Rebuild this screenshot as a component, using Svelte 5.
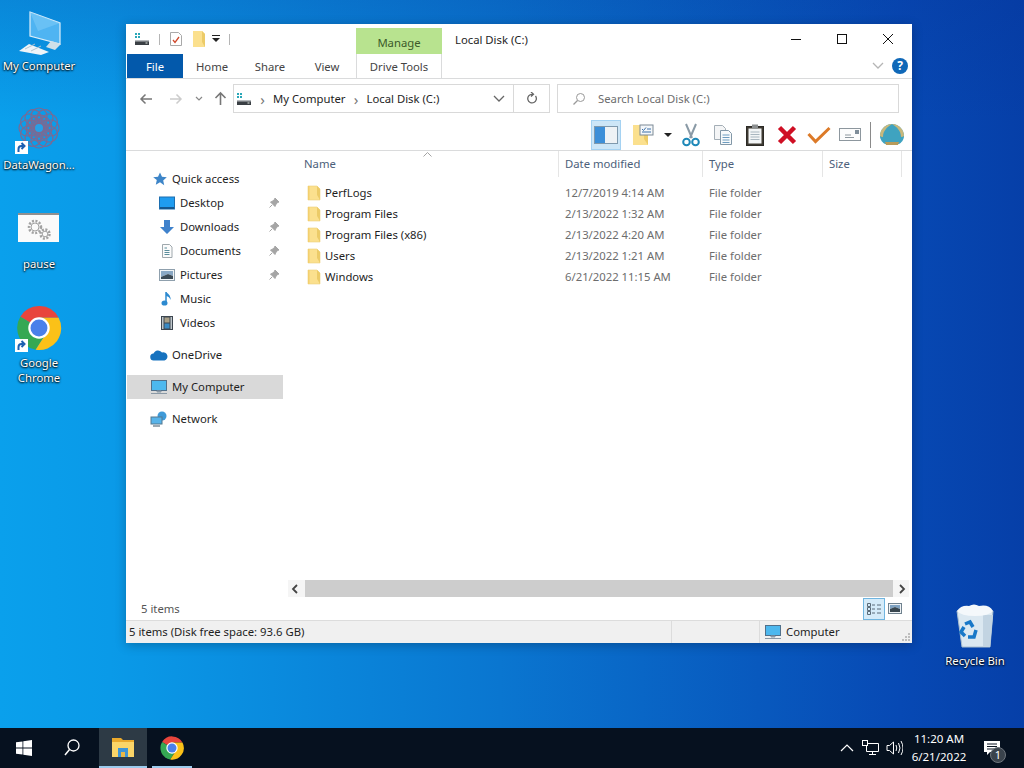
<script lang="ts">
  const files = [
    { name: 'PerfLogs', date: '12/7/2019 4:14 AM' },
    { name: 'Program Files', date: '2/13/2022 1:32 AM' },
    { name: 'Program Files (x86)', date: '2/13/2022 4:20 AM' },
    { name: 'Users', date: '2/13/2022 1:21 AM' },
    { name: 'Windows', date: '6/21/2022 11:15 AM' }
  ];
  const petals = Array.from({ length: 12 }, (_, i) => i * 30);
</script>

{#snippet shortcut()}
  <rect x="0" y="34" width="13" height="13" fill="#fff" />
  <path d="M3.500 45v-3q0-3 3-3h1.500M6.500 36l3 3-3 3" fill="none" stroke="#1c5fb0" stroke-width="2" />
{/snippet}

{#snippet chromeLogo()}
  <path d="M24 24 7.500 14A19.500 19.500 0 0 1 41.400 15H24z" fill="#e8453c" />
  <path d="M24 24 7.500 14A19.500 19.500 0 0 0 21 43.300l7-11z" fill="#35a853" />
  <path d="M24 15h17.400A19.500 19.500 0 0 1 21 43.300l9-14z" fill="#fbc118" />
  <circle cx="24" cy="24" r="9.500" fill="#fff" />
  <circle cx="24" cy="24" r="7.500" fill="#4a80ea" />
{/snippet}

{#snippet drive()}
  <svg width="16" height="16" viewBox="0 0 16 16">
    <path d="M1 2h2v2H1zM4 2h2v2H4zM1 5h2v2H1zM4 5h2v2H4z" fill="#2aa7b8" />
    <rect x="1" y="9" width="14" height="5" fill="#3a3f44" />
    <rect x="1" y="9" width="14" height="1.500" fill="#b6babd" />
    <rect x="11.500" y="11.500" width="2" height="1" fill="#e8f0e8" />
  </svg>
{/snippet}

{#snippet monitor()}
  <svg width="18" height="16" viewBox="0 0 18 16">
    <rect x="1.500" y="1.500" width="15" height="10" fill="#4db8ee" stroke="#51708a" />
    <path d="M7 12h4v1H7zM1 14.500h16" stroke="#8a99a6" fill="#8a99a6" />
  </svg>
{/snippet}

{#snippet folder()}
  <svg class="folder" width="14" height="16" viewBox="0 0 14 16">
    <path d="M1 1h9l3 3v11H1z" fill="#fbe08e" stroke="#ecd27e" stroke-width=".6" />
    <path d="M10 1v9l3 5V4z" fill="#eccb68" />
    <path d="M1 1h1.500v14H1z" fill="#f3cf6e" />
  </svg>
{/snippet}

{#snippet pin()}
  <svg class="pin" width="12" height="12" viewBox="0 0 12 12">
    <path d="M7 1l4 4-1.500.5L7.500 8 7 9.500 2.500 5 4 4.500 6.500 2.500zM4 8l-2.500 2.500" fill="#a5a5a5" stroke="#a5a5a5" />
  </svg>
{/snippet}

<div class="desktop">
  <div class="icon-col">
    <div class="cell">
      <svg width="48" height="48" viewBox="0 0 48 48">
        <path d="M15 4l30 11v21l-30-8z" fill="#4fb4f2" stroke="#dceefa" stroke-width="1.200" />
        <path d="M15 4l30 11-22 8z" fill="#7cc9f6" opacity=".6" />
        <path d="M36 33l10 3-6 6-9-3z" fill="#cfdfe8" />
        <path d="M4 43l10-7 20 8-8 3z" fill="#eef4f8" />
        <path d="M10 41l10-5M16 43l10-5" stroke="#b3c4d0" />
      </svg>
      <span>My Computer</span>
    </div>
    <div class="cell">
      <svg width="48" height="48" viewBox="0 0 48 48">
        <g fill="none" stroke="#a05a78" stroke-width="1.200" opacity=".75">
          {#each petals as a}
            <circle cx="24" cy="9" r="8" transform="rotate({a} 24 21)" />
            <circle cx="24" cy="14" r="6" transform="rotate({a + 15} 24 21)" />
          {/each}
        </g>
        <circle cx="24" cy="21" r="4" fill="#28a0e6" />
        {@render shortcut()}
      </svg>
      <span>DataWagon...</span>
    </div>
    <div class="cell">
      <svg width="48" height="48" viewBox="0 0 48 48">
        <rect x="3" y="7" width="41" height="29" fill="#fafafa" />
        <rect x="3" y="7" width="41" height="2" fill="#8f8f8f" />
        <g fill="none" stroke="#a2a2a2">
          <circle cx="20" cy="21" r="6" stroke-width="2.500" stroke-dasharray="2 1.500" />
          <circle cx="20" cy="21" r="4" />
          <circle cx="30" cy="28" r="4.500" stroke-width="2.500" stroke-dasharray="2 1.500" />
          <circle cx="30" cy="28" r="2.800" />
        </g>
      </svg>
      <span>pause</span>
    </div>
    <div class="cell">
      <svg width="48" height="48" viewBox="0 0 48 48">
        <g transform="translate(24 23) scale(1.130) translate(-24 -24)">{@render chromeLogo()}</g>
        {@render shortcut()}
      </svg>
      <span>Google<br />Chrome</span>
    </div>
  </div>

  <div class="cell recycle">
    <svg width="48" height="48" viewBox="0 0 48 48">
      <path d="M6 8h36l-3 36H11z" fill="#dbe8f1" stroke="#a9bfd0" />
      <path d="M32 12h10l-3 32h-7z" fill="#c2d4e2" />
      <path d="M6 8q4-6 12-5 5-3 10 0 10-2 14 5-4 5-18 5T6 8z" fill="#f4f8fb" />
      <g fill="none" stroke="#1878c8" stroke-width="3.500">
        <path d="M14 21l5-2 3 5" />
        <path d="M25 27l-2 7-6 0" />
        <path d="M14 33l-4-4 3-5" />
      </g>
    </svg>
    <span>Recycle Bin</span>
  </div>

  <div class="window">
    <div class="titlebar">
      <div class="qat">
        {@render drive()}
        <i class="qsep"></i>
        <svg width="14" height="16" viewBox="0 0 14 16">
          <path d="M1.500 1.500h8l3 3v10h-11z" fill="#fff" stroke="#a9a9a9" />
          <path d="M4 9l2 2.500L10 6" fill="none" stroke="#d0492c" stroke-width="1.300" />
        </svg>
        <svg width="14" height="16" viewBox="0 0 14 16">
          <path d="M1 0h9l3 3v13H1z" fill="#fbe08e" />
          <path d="M10 0v11l3 5V3z" fill="#eccb68" />
        </svg>
        <svg class="qat-drop" width="8" height="8" viewBox="0 0 8 8"><path d="M0 0h8v1H0zM0 3h8L4 7z" fill="#222" /></svg>
        <i class="qsep"></i>
      </div>
      <div class="manage">Manage</div>
      <div class="title">Local Disk (C:)</div>
      <div class="controls">
        <div class="ctl"><svg width="14" height="14" viewBox="0 0 14 14"><path d="M2 7.500h10" stroke="#111" /></svg></div>
        <div class="ctl"><svg width="14" height="14" viewBox="0 0 14 14"><rect x="2.500" y="2.500" width="9" height="9" fill="none" stroke="#111" /></svg></div>
        <div class="ctl"><svg width="14" height="14" viewBox="0 0 14 14"><path d="M2 2l10 10M12 2L2 12" stroke="#111" /></svg></div>
      </div>
    </div>

    <div class="tabs">
      <div class="tab file">File</div>
      <div class="tab home">Home</div>
      <div class="tab share">Share</div>
      <div class="tab view">View</div>
      <div class="tab tools">Drive Tools</div>
      <div class="tab-end">
        <svg width="12" height="8" viewBox="0 0 12 8"><path d="M1 1l5 5 5-5" fill="none" stroke="#b5b5b5" stroke-width="1.300" /></svg>
        <div class="help">?</div>
      </div>
    </div>

    <div class="addr-row">
      <div class="nav-btns">
        <svg width="14" height="12" viewBox="0 0 14 12"><path d="M13 6H2M6.500 1.500 2 6l4.500 4.500" fill="none" stroke="#777" stroke-width="1.500" /></svg>
        <svg class="fwd" width="14" height="12" viewBox="0 0 14 12"><path d="M1 6h11M7.500 1.500 12 6l-4.500 4.500" fill="none" stroke="#ccc" stroke-width="1.500" /></svg>
        <svg width="8" height="6" viewBox="0 0 8 6"><path d="M1 1l3 3 3-3" fill="none" stroke="#888" stroke-width="1.200" /></svg>
        <svg width="13" height="15" viewBox="0 0 13 15"><path d="M6.500 14V2M1.500 7 6.500 2l5 5" fill="none" stroke="#777" stroke-width="1.600" /></svg>
      </div>
      <div class="addr">
        {@render drive()}
        <span class="crumb-arrow">›</span>
        <span>My Computer</span>
        <span class="crumb-arrow">›</span>
        <span>Local Disk (C:)</span>
        <svg class="addr-drop" width="12" height="8" viewBox="0 0 12 8"><path d="M1 1l5 5 5-5" fill="none" stroke="#666" stroke-width="1.300" /></svg>
      </div>
      <div class="refresh">
        <svg width="12" height="13" viewBox="0 0 12 13"><path d="M9.500 4a4.300 4.300 0 1 1-3.500-1.700H7M5 0l2.500 2.300L5 4.500" fill="none" stroke="#666" stroke-width="1.300" /></svg>
      </div>
      <div class="search">
        <svg width="14" height="14" viewBox="0 0 14 14"><circle cx="8.500" cy="5.500" r="4" fill="none" stroke="#999" /><path d="M5.500 8.500 1.500 12.500" stroke="#999" stroke-width="1.200" /></svg>
        <span>Search Local Disk (C:)</span>
      </div>
    </div>

    <div class="toolbar">
      <div class="tool pane">
        <svg width="24" height="18" viewBox="0 0 24 18">
          <rect x=".5" y=".5" width="23" height="17" fill="#eef2f5" stroke="#7f99ad" />
          <rect x="1" y="1" width="10" height="16" fill="#3d8fd8" />
        </svg>
      </div>
      <div class="tool wide">
        <svg width="22" height="22" viewBox="0 0 22 22">
          <path d="M1 1h11l4 4v16H1z" fill="#fbe08e" />
          <path d="M12 1v14l4 6V5z" fill="#eccb68" />
          <rect x="8" y="1" width="13" height="10" fill="#f4f7fa" stroke="#7d8a96" />
          <path d="M10 5l1.500 1.500L14 3.500M15 5h4M10 8h9" fill="none" stroke="#3a6fa8" />
        </svg>
      </div>
      <div class="drop"><svg width="8" height="4" viewBox="0 0 8 4"><path d="M0 0h8L4 4z" fill="#222" /></svg></div>
      <div class="tool">
        <svg width="18" height="24" viewBox="0 0 18 24">
          <path d="M4 1l6 14M14 1L8 15" stroke="#8a9aa6" stroke-width="2" />
          <circle cx="4.500" cy="19" r="3.300" fill="none" stroke="#1e88b8" stroke-width="2" />
          <circle cx="13.500" cy="19" r="3.300" fill="none" stroke="#1e88b8" stroke-width="2" />
        </svg>
      </div>
      <div class="tool">
        <svg width="20" height="22" viewBox="0 0 20 22">
          <path d="M1.500 1.500h8l3 3v11h-11z" fill="#f4f5f6" stroke="#a4aeb6" />
          <path d="M7.500 6.500h8l3 3v11h-11z" fill="#f8fafb" stroke="#8398a8" />
          <path d="M9.500 11h7M9.500 13.500h7M9.500 16h7M9.500 18.500h7" stroke="#6d9cc0" />
        </svg>
      </div>
      <div class="tool">
        <svg width="18" height="22" viewBox="0 0 18 22">
          <rect x=".5" y="2.500" width="17" height="19" fill="#3e3a32" stroke="#2c2a26" />
          <rect x="2.500" y="4.500" width="13" height="15" fill="#f3f5f6" />
          <path d="M4.500 8h9M4.500 10.500h9M4.500 13h9M4.500 15.500h9" stroke="#a9b6bf" />
          <rect x="6" y="0.500" width="6" height="4" fill="#8c8f90" />
        </svg>
      </div>
      <div class="tool">
        <svg width="20" height="20" viewBox="0 0 20 20"><path d="M2.500 2.500l15 15M17.500 2.500l-15 15" stroke="#cf0f24" stroke-width="4.500" /></svg>
      </div>
      <div class="tool">
        <svg width="24" height="18" viewBox="0 0 24 18"><path d="M1.500 8l7 7.500L22.500 2" fill="none" stroke="#dc7a28" stroke-width="3" /></svg>
      </div>
      <div class="tool">
        <svg width="24" height="14" viewBox="0 0 24 14">
          <rect x=".5" y=".5" width="21" height="12" fill="#fcfcfc" stroke="#8d979e" />
          <rect x="16" y="2" width="4" height="4" fill="#7e8c98" />
          <path d="M6 7h6M6 9.500h9" stroke="#8d979e" />
        </svg>
      </div>
      <i class="tsep"></i>
      <div class="tool">
        <svg width="26" height="24" viewBox="0 0 26 24">
          <path d="M13 1C6 1 1 7 1 13c0 4 3 7 5 8h14c2-1 5-4 5-8 0-6-5-12-12-12z" fill="#3fa3c0" />
          <path d="M13 1C6 1 1 7 1 13q1 1 3 1C4 8 8 4 13 1zM13 1c7 0 12 6 12 12q-1 1-3 1C22 8 18 4 13 1z" fill="#c8b87c" />
          <path d="M6 19h14l-1 3H7z" fill="#b89b5a" />
        </svg>
      </div>
    </div>

    <div class="body">
      <nav class="nav">
        <div class="group">
          <div class="row top">
            <svg width="16" height="16" viewBox="0 0 16 16"><path d="M8 1.500l2 4.300 4.800.5-3.600 3.200 1 4.700L8 11.300l-4.200 2.400 1-4.700L1.200 6.300 6 5.800z" fill="#3d85c8" /></svg>
            <span>Quick access</span>
          </div>
          <div class="row sub">
            <svg width="16" height="14" viewBox="0 0 16 14"><rect x=".5" y="1" width="15" height="12" fill="#1f9cf0" stroke="#1c6eb0" /><path d="M1 11h14v2H1z" fill="#15578f" /></svg>
            <span>Desktop</span>{@render pin()}
          </div>
          <div class="row sub">
            <svg width="16" height="16" viewBox="0 0 16 16"><path d="M5 1h6v7h4l-7 7-7-7h4z" fill="#3f82cc" /></svg>
            <span>Downloads</span>{@render pin()}
          </div>
          <div class="row sub">
            <svg width="16" height="16" viewBox="0 0 16 16"><path d="M3.500 1.500h7l2.500 2.500v10.500H3.500z" fill="#fbfbfb" stroke="#9fa8ad" /><path d="M5.500 5H8M5.500 7.500h5M5.500 9.500h5M5.500 11.500h5" stroke="#5b8e9c" /></svg>
            <span>Documents</span>{@render pin()}
          </div>
          <div class="row sub">
            <svg width="16" height="14" viewBox="0 0 16 14"><rect x=".5" y="1.500" width="15" height="11" fill="#f2f5f7" stroke="#8fa0ad" /><path d="M2 3h12v5L9 6 2 9z" fill="#8aa8c4" /><path d="M2 9l7-3 5 2v3H2z" fill="#3c4a55" /></svg>
            <span>Pictures</span>
            {@render pin()}
          </div>
          <div class="row sub">
            <svg width="16" height="16" viewBox="0 0 16 16"><path d="M7 1v10" stroke="#2d8ad0" stroke-width="1.500" /><ellipse cx="5.500" cy="12" rx="3" ry="2.600" fill="#2d8ad0" /><path d="M7 1q5 3 4.500 8-1-3.500-4.500-4z" fill="#2d8ad0" /></svg>
            <span>Music</span>
          </div>
          <div class="row sub">
            <svg width="16" height="16" viewBox="0 0 16 16"><rect x="2" y="1" width="12" height="14" fill="#3d4650" /><path d="M3 2h1.500v12H3zM11.500 2H13v12h-1.500z" fill="#bfc7cc" stroke-dasharray="1 1" /><rect x="5.500" y="2.500" width="5" height="5" fill="#a9a088" /><rect x="5.500" y="8.500" width="5" height="5" fill="#3a8ac4" /></svg>
            <span>Videos</span>
          </div>
        </div>
        <div class="group">
          <div class="row top cloud">
            <svg width="18" height="12" viewBox="0 0 18 12"><path d="M4 11.500a3.500 3.500 0 0 1-.5-7A5 5 0 0 1 12 3.500a4 4 0 0 1 2.500 8z" fill="#1672bf" /></svg>
            <span>OneDrive</span>
          </div>
        </div>
        <div class="group">
          <div class="row top cloud selected">
            {@render monitor()}
            <span>My Computer</span>
          </div>
        </div>
        <div class="group">
          <div class="row top cloud">
            <svg width="18" height="16" viewBox="0 0 18 16">
              <circle cx="12" cy="5" r="4.500" fill="#3f9ad8" />
              <rect x="1" y="6" width="11" height="7" fill="#58b4ea" stroke="#55798f" />
              <path d="M3 15h7" stroke="#7c8d98" stroke-width="1.500" />
            </svg>
            <span>Network</span>
          </div>
        </div>
      </nav>

      <section class="list">
        <div class="sort-caret">
          <svg width="9" height="5" viewBox="0 0 9 5"><path d="M.5 4.500l4-4 4 4" fill="none" stroke="#a3a3a3" /></svg>
        </div>
        <div class="head">
          <div class="col-name">Name</div>
          <div class="col-date">Date modified</div>
          <div class="col-type">Type</div>
          <div class="col-size">Size</div>
        </div>
        <div class="rows">
          {#each files as f}
            <div class="file-row">
              <div class="col-name name-cell">{@render folder()}<span>{f.name}</span></div>
              <div class="col-date">{f.date}</div>
              <div class="col-type">File folder</div>
            </div>
          {/each}
        </div>
        <div class="hscroll">
          <svg width="8" height="10" viewBox="0 0 8 10"><path d="M6 1L2 5l4 4" fill="none" stroke="#444" stroke-width="1.800" /></svg>
          <div class="thumb"></div>
          <svg width="8" height="10" viewBox="0 0 8 10"><path d="M2 1l4 4-4 4" fill="none" stroke="#444" stroke-width="1.800" /></svg>
        </div>
      </section>
    </div>

    <div class="details">
      <span>5 items</span>
      <div class="views">
        <div class="vbtn on">
          <svg width="16" height="14" viewBox="0 0 16 14"><path d="M1.500 1.500h3v3h-3zM1.500 5.500h3v3h-3zM1.500 9.500h3v3h-3z" fill="none" stroke="#5a6b78" /><path d="M6 3h3M11 3h4M6 7h3M11 7h4M6 11h3M11 11h4" stroke="#5a6b78" /></svg>
        </div>
        <div class="vbtn small">
          <svg width="14" height="12" viewBox="0 0 14 12"><rect x=".5" y=".5" width="13" height="10" fill="#eef2f5" stroke="#70828f" /><path d="M2 2h10v4L7 4 2 6z" fill="#7fa2c2" /><path d="M2 6l5-2 5 2v3H2z" fill="#39464f" /></svg>
        </div>
      </div>
    </div>

    <div class="status">
      <div class="st-main">5 items (Disk free space: 93.6 GB)</div>
      <div class="st-mid"></div>
      <div class="st-comp">{@render monitor()}<span>Computer</span></div>
      <svg class="grip" width="9" height="9" viewBox="0 0 9 9"><path d="M6 0h2v2H6zM3 3h2v2H3zM6 3h2v2H6zM0 6h2v2H0zM3 6h2v2H3zM6 6h2v2H6z" fill="#bdbdbd" /></svg>
    </div>
  </div>

  <footer class="taskbar">
    <div class="tb-btn">
      <svg width="16" height="16" viewBox="0 0 16 16"><path d="M0 2.300 6.500 1.400v6.200H0zM7.300 1.300 16 0v7.600H7.300zM0 8.400h6.500v6.200L0 13.700zM7.300 8.400H16V16l-8.700-1.300z" fill="#fff" /></svg>
    </div>
    <div class="tb-btn">
      <svg width="16" height="18" viewBox="0 0 16 18"><circle cx="9.500" cy="6.500" r="5.500" fill="none" stroke="#fff" stroke-width="1.300" /><path d="M5.500 10.500 1 16" stroke="#fff" stroke-width="1.500" /></svg>
    </div>
    <div class="tb-btn explorer">
      <svg width="22" height="20" viewBox="0 0 22 20">
        <path d="M0 1h9l2 2h11v4H0z" fill="#eaa92c" />
        <rect y="5" width="22" height="15" fill="#fbd568" />
        <path d="M6 20v-9h10v9h-3v-5H9v5z" fill="#3f95d6" />
        <rect x="9" y="15" width="4" height="5" fill="#e9b948" />
      </svg>
    </div>
    <div class="tb-btn running">
      <svg width="24" height="24" viewBox="4 4 40 40">{@render chromeLogo()}</svg>
    </div>
    <div class="tray">
      <svg class="caret" width="14" height="8" viewBox="0 0 14 8"><path d="M1 7l6-6 6 6" fill="none" stroke="#fff" stroke-width="1.200" /></svg>
      <svg width="17" height="16" viewBox="0 0 17 16"><path d="M4.500 3.500h12v8h-12zM10.500 11.500v3M7 14.500h7" fill="none" stroke="#fff" /><rect x=".5" y=".5" width="5" height="5" fill="#0a1522" stroke="#fff" /></svg>
      <svg width="17" height="16" viewBox="0 0 17 16"><path d="M1 5.500h2.500L7.500 2v12l-4-3.500H1zM10 5q1.500 3 0 6M12.500 3q3 5 0 10M15 1q4 7 0 14" fill="none" stroke="#fff" /></svg>
      <div class="clock"><div>11:20 AM</div><div>6/21/2022</div></div>
      <div class="notif">
        <svg width="16" height="16" viewBox="0 0 16 16"><path d="M0 1h16v11H6l-3 3v-3H0z" fill="#fff" /><path d="M3 4h10M3 6.500h10M3 9h7" stroke="#0a1522" /></svg>
        <b>1</b>
      </div>
    </div>
  </footer>
</div>

<style>
  :global(body) {
    margin: 0;
    overflow: hidden;
  }

  .desktop {
    position: relative;
    width: 1024px;
    height: 768px;
    overflow: hidden;
    font: 11.300px/16px "Noto Sans", "Open Sans", sans-serif;
    color: #1e1e1e;
    background:
      linear-gradient(180deg, rgba(6, 50, 150, 0.22) 0, rgba(6, 50, 150, 0) 120px),
      linear-gradient(90deg, #0aa0ec 0, #0a9ae8 110px, #0a76d0 500px, #0749b4 900px, #063fa8 1024px);
  }

  .icon-col {
    position: absolute;
    left: 1px;
    top: 8px;
  }

  .cell {
    width: 76px;
    height: 99px;
    display: flex;
    flex-direction: column;
    align-items: center;
    color: #fff;
    text-align: center;
    line-height: 15px;
    white-space: nowrap;
    text-shadow: 0 1px 2px #000, 0 0 2px #000;
  }

  .cell svg {
    margin-bottom: 2px;
    flex: none;
  }

  .recycle {
    position: absolute;
    left: 937px;
    top: 603px;
  }

  .window {
    position: absolute;
    left: 126px;
    top: 24px;
    width: 786px;
    height: 619px;
    background: #fff;
    display: flex;
    flex-direction: column;
    box-shadow: 0 2px 10px rgba(0, 0, 0, 0.25);
  }

  .titlebar {
    height: 30px;
    display: flex;
    align-items: stretch;
    flex: none;
  }

  .qat {
    width: 230px;
    display: flex;
    align-items: center;
    gap: 9px;
    padding-left: 8px;
    box-sizing: border-box;
  }

  .qat-drop {
    margin-left: -3px;
  }

  .qsep {
    width: 1px;
    height: 11px;
    background: #b5b5b5;
  }

  .manage {
    margin-top: 4px;
    width: 86px;
    background: #b8e38f;
    color: #3c5a2a;
    text-align: center;
    line-height: 29px;
  }

  .title {
    margin-left: 13px;
    line-height: 31px;
    flex: 1;
  }

  .controls {
    display: flex;
    padding-right: 1px;
  }

  .ctl {
    width: 46px;
    display: flex;
    align-items: center;
    justify-content: center;
  }

  .tabs {
    height: 24px;
    flex: none;
    display: flex;
    padding-left: 1px;
    border-bottom: 1px solid #dadbdc;
    color: #444;
    line-height: 26px;
  }

  .tab {
    text-align: center;
  }

  .file {
    width: 56px;
    background: #0359ab;
    color: #fff;
  }

  .home { width: 58px; }
  .share { width: 58px; }
  .view { width: 56px; }

  .tools {
    width: 84px;
    margin-left: 1px;
    border-left: 1px solid #dadbdc;
    border-right: 1px solid #dadbdc;
    color: #444;
  }

  .tab-end {
    margin-left: auto;
    display: flex;
    align-items: center;
    gap: 8px;
    padding-right: 4px;
  }

  .help {
    width: 16px;
    height: 16px;
    border-radius: 50%;
    background: #0f68b8;
    color: #fff;
    font-weight: 700;
    font-size: 12px;
    line-height: 16px;
    text-align: center;
  }

  .addr-row {
    height: 41px;
    flex: none;
    display: flex;
    align-items: flex-start;
    padding-top: 5px;
    box-sizing: border-box;
  }

  .nav-btns {
    width: 107px;
    height: 29px;
    display: flex;
    align-items: center;
    padding-left: 13px;
    box-sizing: border-box;
    gap: 11px;
  }

  .fwd {
    margin: 0 1px 0 5px;
  }

  .addr {
    width: 281px;
    height: 29px;
    box-sizing: border-box;
    border: 1px solid #d9d9d9;
    display: flex;
    align-items: center;
    padding-left: 2px;
  }

  .crumb-arrow {
    width: 21px;
    text-align: center;
    color: #777;
    font-size: 15px;
    line-height: 14px;
  }

  .addr-drop {
    margin-left: auto;
    margin-right: 8px;
  }

  .refresh {
    width: 36px;
    height: 29px;
    box-sizing: border-box;
    border: 1px solid #d9d9d9;
    border-left: none;
    display: flex;
    align-items: center;
    justify-content: center;
  }

  .search {
    margin-left: 7px;
    width: 342px;
    height: 29px;
    box-sizing: border-box;
    border: 1px solid #d9d9d9;
    display: flex;
    align-items: center;
    padding-left: 14px;
    gap: 12px;
    color: #6d6d6d;
  }

  .toolbar {
    height: 31px;
    flex: none;
    display: flex;
    justify-content: flex-end;
    padding-right: 4px;
    border-bottom: 1px solid #dadbdc;
    box-sizing: border-box;
  }

  .tool {
    width: 32px;
    display: flex;
    align-items: center;
    justify-content: center;
  }

  .pane {
    width: 30px;
    box-sizing: border-box;
    background: #cde6f7;
    border: 1px solid #a5d2f2;
    margin-right: 6px;
  }

  .tool.wide {
    width: 32px;
    margin-right: 3px;
  }

  .drop {
    width: 12px;
    display: flex;
    align-items: center;
    justify-content: center;
    margin-right: 1px;
  }

  .tsep {
    width: 1px;
    height: 26px;
    background: #8a8a8a;
    align-self: center;
    margin: 0 5px 0 3px;
  }

  .body {
    flex: 1;
    min-height: 0;
    display: flex;
  }

  .nav {
    width: 157px;
    flex: none;
    padding-top: 16px;
    padding-left: 1px;
    box-sizing: border-box;
    display: flex;
    flex-direction: column;
    gap: 8px;
  }

  .row {
    height: 24px;
    display: flex;
    align-items: center;
    position: relative;
  }

  .row.top {
    padding-left: 25px;
    gap: 4px;
  }

  .row.cloud {
    padding-left: 23px;
    gap: 4px;
  }

  .row.sub {
    padding-left: 32px;
    gap: 5px;
  }

  .selected {
    background: #d9d9d9;
  }

  .pin {
    position: absolute;
    left: 141px;
    top: 6px;
  }

  .list {
    flex: 1;
    min-width: 0;
    display: flex;
    flex-direction: column;
    position: relative;
  }

  .sort-caret {
    position: absolute;
    left: 140px;
    top: -1px;
    line-height: 5px;
  }

  .head {
    height: 26px;
    flex: none;
    display: flex;
    align-items: center;
    color: #4c607a;
    padding-left: 21px;
    margin-right: 7px;
    box-sizing: border-box;
  }

  .head > div {
    height: 26px;
    line-height: 25px;
    box-sizing: border-box;
  }

  .col-name { width: 254px; flex: none; }
  .col-date { width: 144px; flex: none; padding-left: 7px; box-sizing: border-box; }
  .col-type { width: 120px; flex: none; padding-left: 7px; box-sizing: border-box; }
  .col-size { width: 80px; flex: none; padding-left: 7px; box-sizing: border-box; }

  .head .col-date,
  .head .col-type,
  .head .col-size {
    border-left: 1px solid #e5e5e5;
    padding-left: 6px;
  }

  .head .col-size {
    border-right: 1px solid #e5e5e5;
  }

  .rows {
    flex: 1;
    padding-top: 5px;
  }

  .file-row {
    height: 21px;
    display: flex;
    align-items: center;
    padding-left: 21px;
    color: #6d6d6d;
  }

  .name-cell {
    display: flex;
    align-items: center;
    gap: 4px;
    color: #1e1e1e;
    padding-left: 3px;
    box-sizing: border-box;
  }

  .hscroll {
    height: 17px;
    flex: none;
    margin: 0 3px 0 5px;
    display: flex;
    align-items: center;
    justify-content: space-between;
    background: #f5f5f5;
    padding: 0 3px 0 3px;
    box-sizing: border-box;
  }

  .thumb {
    width: 588px;
    height: 100%;
    background: #cdcdcd;
  }

  .details {
    height: 23px;
    flex: none;
    display: flex;
    align-items: center;
    justify-content: space-between;
    padding-left: 15px;
    padding-right: 8px;
    color: #555;
  }

  .views {
    display: flex;
    gap: 1px;
  }

  .vbtn {
    width: 22px;
    height: 22px;
    box-sizing: border-box;
    display: flex;
    align-items: center;
    justify-content: center;
  }

  .vbtn.small {
    width: 18px;
  }

  .vbtn.on {
    background: #d5ebf9;
    border: 1px solid #70b5e0;
  }

  .status {
    height: 23px;
    flex: none;
    background: #f0f0f0;
    border-top: 1px solid #dcdcdc;
    display: flex;
    align-items: center;
    position: relative;
    box-sizing: border-box;
  }

  .st-main {
    width: 545px;
    padding-left: 3px;
    box-sizing: border-box;
    flex: none;
  }

  .st-mid {
    width: 87px;
    height: 100%;
    border-left: 1px solid #dcdcdc;
    border-right: 1px solid #dcdcdc;
    flex: none;
  }

  .st-comp {
    display: flex;
    align-items: center;
    gap: 4px;
    padding-left: 4px;
  }

  .grip {
    position: absolute;
    right: 1px;
    bottom: 1px;
  }

  .taskbar {
    position: absolute;
    left: 0;
    right: 0;
    bottom: 0;
    height: 40px;
    background: #06111f;
    display: flex;
    color: #fff;
    font-size: 11.500px;
  }

  .tb-btn {
    width: 48px;
    display: flex;
    align-items: center;
    justify-content: center;
    box-sizing: border-box;
  }

  .explorer {
    margin-left: 3px;
    background: #2d3a45;
    border-bottom: 2px solid #9ccbed;
  }

  .running {
    position: relative;
    margin-left: 1px;
  }

  .running::after {
    content: "";
    position: absolute;
    left: 4px;
    right: 4px;
    bottom: 0;
    height: 2px;
    background: #9ccbed;
  }

  .tray {
    margin-left: auto;
    display: flex;
    align-items: center;
    padding-right: 12px;
    gap: 7px;
  }

  .caret {
    margin-right: 1px;
  }

  .clock {
    width: 66px;
    text-align: center;
    line-height: 18px;
    margin-left: -4px;
    white-space: nowrap;
  }

  .notif {
    position: relative;
    width: 40px;
    display: flex;
    justify-content: center;
    margin-left: -7px;
    box-sizing: border-box;
  }

  .notif b {
    position: absolute;
    left: 18px;
    top: 7px;
    width: 16px;
    height: 16px;
    box-sizing: border-box;
    border-radius: 50%;
    background: #3a434c;
    border: 1px solid #6f767d;
    font-weight: 400;
    font-size: 11px;
    line-height: 14px;
    text-align: center;
  }
</style>
